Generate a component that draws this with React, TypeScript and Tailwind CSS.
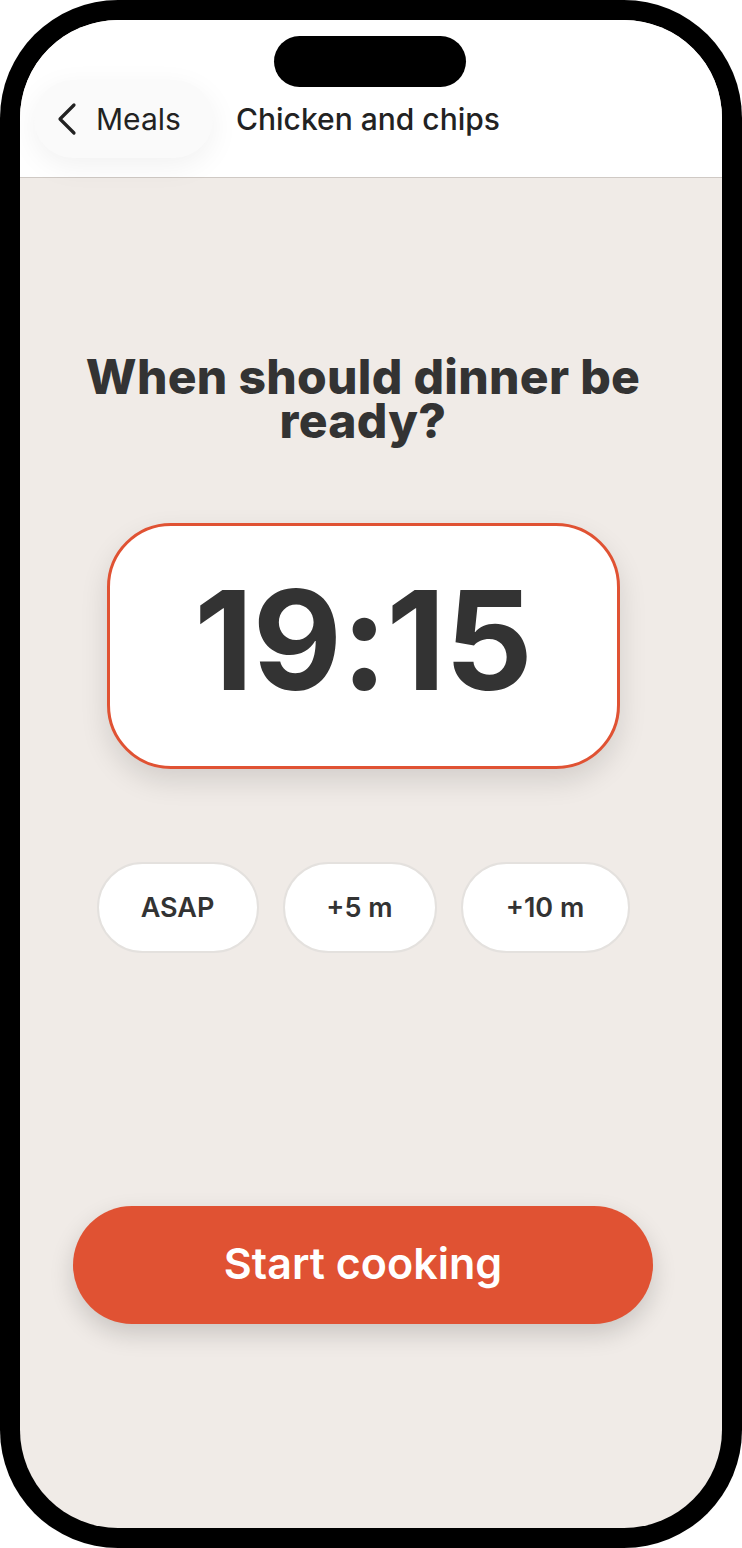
import React from 'react';

const QuickChip: React.FC<{ label: string; width: string }> = ({ label, width }) => (
  <button
    className={`h-[91px] ${width} rounded-full bg-white border-2 border-[#e4e1de] text-[27px] font-semibold text-[#333333] flex items-center justify-center pt-[2px]`}
  >
    {label}
  </button>
);

const App: React.FC = () => {
  return (
    <div
      className="w-[742px] h-[1548px] bg-white"
      style={{ fontFamily: 'Inter, "Liberation Sans", sans-serif' }}
    >
      {/* Phone frame */}
      <div className="w-full h-full bg-black rounded-[118px] p-5">
        <div className="relative w-full h-full rounded-[98px] overflow-hidden bg-[#f0ebe7] flex flex-col">
          {/* Dynamic island */}
          <div className="absolute top-4 left-[254px] w-[192px] h-[51px] rounded-full bg-black z-20" />

          {/* Header */}
          <div className="h-[158px] bg-white border-b border-[#cfc9c4] flex items-end pb-[19px] pl-[14px] gap-[23px] shrink-0">
            <button className="h-[78px] w-[179px] rounded-full bg-[#fafafa] shadow-[0_8px_30px_rgba(0,0,0,0.06)] flex items-center pl-[22px] gap-[18px] text-[30px] text-[#222222]">
              <svg width="22" height="34" viewBox="0 0 22 34" fill="none">
                <path d="M18 3L4 17L18 31" stroke="#222222" strokeWidth="3.2" strokeLinecap="round" strokeLinejoin="round" />
              </svg>
              <span>Meals</span>
            </button>
            <h1 className="text-[30px] font-medium text-[#222222] h-[78px] flex items-center">Chicken and chips</h1>
          </div>

          {/* Content */}
          <div className="flex-1 flex flex-col items-center pr-4 pt-[177px]">
            <h2 className="text-[48px] leading-[44px] font-extrabold text-[#333333] text-center w-[600px] tracking-[0.3px]">
              When should dinner be ready?
            </h2>

            <div className="mt-[80px] w-[513px] h-[246px] rounded-[64px] border-[3px] border-[#e05233] bg-white shadow-[0_12px_28px_rgba(0,0,0,0.12)] flex items-center justify-center">
              <span className="text-[138px] leading-none font-bold text-[#333333] tracking-[-1px] -mt-3">19:15</span>
            </div>

            <div className="mt-[93px] flex gap-[24px]">
              <QuickChip label="ASAP" width="w-[162px]" />
              <QuickChip label="+5 m" width="w-[154px]" />
              <QuickChip label="+10 m" width="w-[169px]" />
            </div>

            <button className="mt-[253px] w-[580px] h-[118px] rounded-full bg-[#e05233] shadow-[0_10px_24px_rgba(0,0,0,0.16)] text-white text-[43px] font-semibold pb-1">
              Start cooking
            </button>
          </div>
        </div>
      </div>
    </div>
  );
};

export default App;
